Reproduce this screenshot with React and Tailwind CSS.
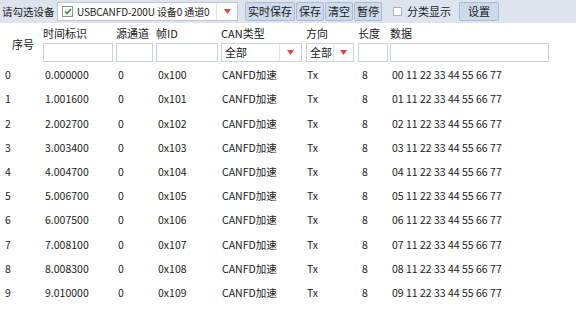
import React from "react";

const rows = Array.from({ length: 10 }, (_, i) => ({
  idx: i,
  time: [
    "0.000000",
    "1.001600",
    "2.002700",
    "3.003400",
    "4.004700",
    "5.006700",
    "6.007500",
    "7.008100",
    "8.008300",
    "9.010000",
  ][i],
  src: "0",
  id: "0x10" + i,
  type: "CANFD加速",
  dir: "Tx",
  len: "8",
  data: "0" + i + " 11 22 33 44 55 66 77",
}));

const Arrow = () => (
  <svg width="7" height="5" viewBox="0 0 7 5">
    <polygon points="0,0 7,0 3.5,5" fill="#e8433a" />
  </svg>
);

const FilterInput = ({ w }) => (
  <div className={`h-[19px] border border-[#c9d3df] bg-white ${w}`}></div>
);

const FilterSelect = ({ w, arrowW }) => (
  <div className={`flex h-[19px] items-center whitespace-nowrap border border-[#c9d3df] bg-white ${w}`}>
    <span className="flex-1 pl-[3px] leading-none">全部</span>
    <div className={`flex h-full items-center justify-center border-l border-[#dfe5ec] ${arrowW}`}>
      <Arrow />
    </div>
  </div>
);

const Col = ({ label, ml, children }) => (
  <div className={`flex flex-col ${ml}`}>
    <span className="h-[20px] whitespace-nowrap pt-[3px] leading-[14px]">{label}</span>
    {children}
  </div>
);

const App = () => {
  return (
    <div
      className="h-[316px] w-[576px] overflow-hidden bg-white text-[10.5px] text-[#1a1a1a]"
      style={{ fontFamily: '"Noto Sans CJK SC", sans-serif' }}
    >
      {/* toolbar */}
      <div className="flex h-[23px] items-center whitespace-nowrap bg-[#dde4ee]">
        <span className="ml-[2px] w-[55px]">请勾选设备</span>
        <div className="flex h-[19px] w-[181px] items-center border border-[#bcc7d4] bg-white">
          <div className="ml-[4px] flex h-[11px] w-[11px] shrink-0 items-center justify-center border border-[#8a939c] bg-white">
            <svg width="8" height="7" viewBox="0 0 8 7">
              <path d="M1 3.5 L3 5.5 L7 1" stroke="#2f9a3a" strokeWidth="1.6" fill="none" />
            </svg>
          </div>
          <span className="ml-[4px] flex-1 text-[10px] tracking-[-0.1px]">USBCANFD-200U 设备0 通道0</span>
          <div className="flex h-full w-[21px] shrink-0 items-center justify-center border-l border-[#dfe5ec]">
            <Arrow />
          </div>
        </div>
        <div className="ml-[7px] flex h-[19px] items-stretch">
          {["实时保存", "保存", "清空", "暂停"].map((b) => (
            <div
              key={b}
              className="mr-[1px] flex items-center rounded-[2px] border border-[#a9bcd6] bg-[#cddaeb] px-[2px] text-[11px] leading-none"
            >
              {b}
            </div>
          ))}
        </div>
        <div className="ml-[10px] h-[9px] w-[9px] border border-[#aab3bd] bg-white"></div>
        <span className="ml-[5px] text-[11px]">分类显示</span>
        <div className="ml-[8px] flex h-[19px] w-[40px] items-center justify-center rounded-[2px] border border-[#a9bcd6] bg-[#cddaeb] text-[11px] leading-none">
          设置
        </div>
      </div>

      {/* header */}
      <div className="flex h-[40px] items-start text-[11px]">
        <span className="ml-[12px] mt-[13px] w-[31px]">序号</span>
        <Col label="时间标识">
          <FilterInput w="w-[70px]" />
        </Col>
        <Col label="源通道" ml="ml-[3px]">
          <FilterInput w="w-[37px]" />
        </Col>
        <Col label="帧ID" ml="ml-[3px]">
          <FilterInput w="w-[62px]" />
        </Col>
        <Col label="CAN类型" ml="ml-[3px]">
          <FilterSelect w="w-[81px]" arrowW="w-[22px]" />
        </Col>
        <Col label="方向" ml="ml-[4px]">
          <FilterSelect w="w-[48px]" arrowW="w-[20px]" />
        </Col>
        <Col label="长度" ml="ml-[4px]">
          <FilterInput w="w-[30px]" />
        </Col>
        <Col label="数据" ml="ml-[2px]">
          <FilterInput w="w-[159px]" />
        </Col>
      </div>

      {/* rows */}
      <div className="flex flex-col">
        {rows.map((r) => (
          <div key={r.idx} className="flex h-[24.2px] items-center whitespace-nowrap">
            <span className="ml-[5px] w-[40px]">{r.idx}</span>
            <span className="w-[73px]">{r.time}</span>
            <span className="w-[40px]">{r.src}</span>
            <span className="w-[64px]">{r.id}</span>
            <span className="w-[85px]">{r.type}</span>
            <span className="w-[55px]">{r.dir}</span>
            <span className="w-[30px]">{r.len}</span>
            <span>{r.data}</span>
          </div>
        ))}
      </div>
    </div>
  );
};

export default App;
